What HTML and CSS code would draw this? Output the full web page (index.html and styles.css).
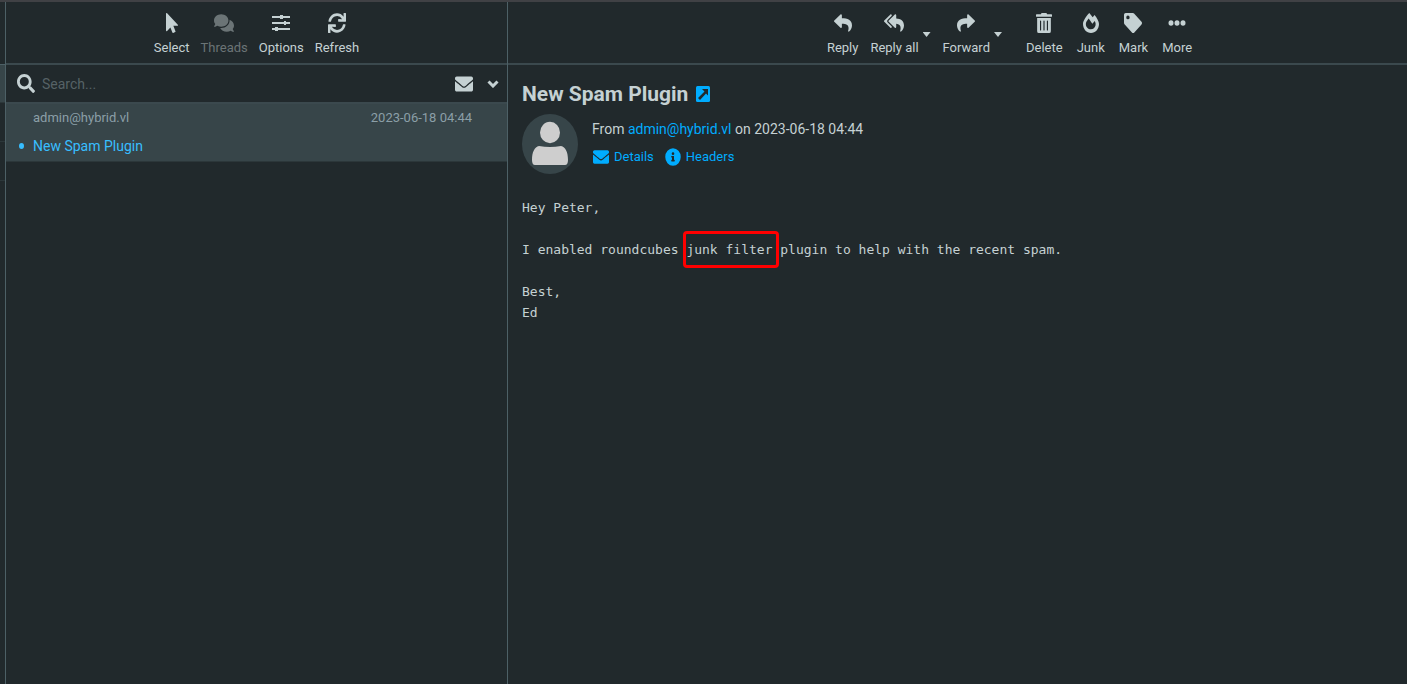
FILE: index.html
```html
<!DOCTYPE html>
<html lang="en">
<head>
<meta charset="utf-8">
<title>New Spam Plugin</title>
<link rel="stylesheet" href="styles.css">
</head>
<body>
<div class="app">
  <div class="folders"><div class="folder folder-selected"></div><div class="folder"></div><div class="folder"></div></div>
  <section class="list">
    <div class="toolbar toolbar-list">
      <button class="tool"><svg width="12" height="20" viewBox="0 0 320 512" preserveAspectRatio="none"><path d="M302 329H196l56 136c4 9-1 20-9 24l-50 21c-9 4-19 0-23-9l-53-129-87 89C19 473 0 464 0 448V18C0 2 20-6 30 5l285 293c11 11 3 31-13 31z"/></svg><span>Select</span></button>
      <button class="tool" disabled><svg width="20" height="20" viewBox="0 0 576 512" preserveAspectRatio="none"><path d="M416 192c0-88.4-93.1-160-208-160S0 103.6 0 192c0 34.3 14.1 65.9 38 92-13.4 30.2-35.500 54.200-35.800 54.500-2.200 2.300-2.800 5.700-1.500 8.700S4.800 352 8 352c36.600 0 66.900-12.300 88.700-25 32.200 15.700 70.300 25 111.300 25 114.900 0 208-71.600 208-160zm122 220c23.900-26 38-57.700 38-92 0-66.900-53.500-124.200-129.300-148.100.9 6.600 1.300 13.300 1.300 20.100 0 105.900-107.700 192-240 192-10.800 0-21.300-.8-31.700-1.900C207.800 439.600 281.800 480 368 480c41 0 79.100-9.200 111.300-25 21.800 12.700 52.100 25 88.700 25 3.200 0 6.100-1.900 7.300-4.800 1.300-2.900.7-6.300-1.500-8.700-.3-.3-22.400-24.200-35.800-54.500z"/></svg><span>Threads</span></button>
      <button class="tool"><svg width="18" height="18" viewBox="0 0 18 18"><path d="M0 2h8V1h3v1h7v2h-7v1H8V4H0zM0 8h12V7h2v1h4v2h-4v1h-2v-1H0zM0 14h3v-1h3v1h12v2H6v1H3v-1H0z"/></svg><span>Options</span></button>
      <button class="tool"><svg width="18" height="20" viewBox="0 0 512 512" preserveAspectRatio="none"><path d="M440.650 12.570l4 82.770A247.160 247.160 0 0 0 255.830 8C134.730 8 33.910 94.920 12.290 209.820A12 12 0 0 0 24.090 224h49.050a12 12 0 0 0 11.670-9.260 175.910 175.910 0 0 1 317-56.940l-101.460-4.860a12 12 0 0 0-12.570 12v47.410a12 12 0 0 0 12 12H500a12 12 0 0 0 12-12V12a12 12 0 0 0-12-12h-47.370a12 12 0 0 0-11.980 12.570zM255.830 432a175.610 175.610 0 0 1-146-77.800l101.800 4.870a12 12 0 0 0 12.570-12v-47.400a12 12 0 0 0-12-12H12a12 12 0 0 0-12 12V500a12 12 0 0 0 12 12h47.350a12 12 0 0 0 12-12.600l-4.150-82.570A247.170 247.170 0 0 0 255.830 504c121.110 0 221.930-86.920 243.550-201.820a12 12 0 0 0-11.800-14.180h-49.050a12 12 0 0 0-11.670 9.260A175.860 175.860 0 0 1 255.830 432z"/></svg><span>Refresh</span></button>
    </div>
    <div class="search">
      <svg width="18" height="19" viewBox="0 0 512 512" preserveAspectRatio="none"><path d="M505 443L405 343c-4-5-10-7-17-7h-16c28-35 44-80 44-128C416 93 323 0 208 0S0 93 0 208s93 208 208 208c48 0 93-16 128-44v16c0 7 2 13 7 17l100 100c9 9 24 9 34 0l28-28c9-10 9-25 0-34zM208 336a128 128 0 1 1 0-256 128 128 0 0 1 0 256z"/></svg>
      <input type="text" placeholder="Search..." aria-label="Search">
      <button class="icon-button" aria-label="Unread"><svg width="18" height="20" viewBox="0 0 512 512" preserveAspectRatio="none"><use href="#envelope"/></svg></button>
      <button class="icon-button" aria-label="Search options"><svg width="12" height="8" viewBox="0 0 12 8"><path d="M1.500 1.500L6 6l4.500-4.500" class="chevron"/></svg></button>
    </div>
    <article class="message">
      <div class="message-meta"><span>admin@hybrid.vl</span><time>2023-06-18 04:44</time></div>
      <div class="message-subject"><span class="dot"></span><a href="#">New Spam Plugin</a></div>
    </article>
  </section>
  <main class="mail">
    <div class="toolbar toolbar-mail">
      <button class="tool"><svg width="18" height="20" viewBox="0 0 512 512" preserveAspectRatio="none"><path id="reply" d="M8.300 189.800L184.300 37.900C199.700 24.500 224 35.300 224 56v80c160.600 1.900 288 34 288 186.300 0 61.500-39.600 122.300-83.300 154.200-13.700 9.900-33.100-2.600-28.100-18.700 45.300-145-21.500-183.500-176.600-185.700V360c0 20.700-24.300 31.500-39.700 18.200l-176-152c-11.100-9.600-11.100-26.800 0-36.400z"/></svg><span>Reply</span></button>
      <button class="tool"><svg width="20" height="20" viewBox="0 0 576 512" preserveAspectRatio="none"><path d="M136.300 189.800L312.300 37.900C327.700 24.500 352 35.300 352 56v82.800c129.200 10.200 224 52.200 224 183.500 0 61.500-39.600 122.300-83.300 154.200-13.700 9.900-33.100-2.600-28.100-18.700 38.500-123.100-3.900-169.400-112.600-182V360c0 20.700-24.300 31.500-39.700 18.200l-176-152c-11.100-9.600-11.100-26.800 0-36.400zm-128 36.400l176 152C199.700 391.400 224 380.700 224 360v-15.800l-108.600-93.800a56 56 0 0 1 0-84.800L224 71.800V56c0-20.700-24.300-31.500-39.700-18.100L8.300 189.800c-11.100 9.600-11.100 26.800 0 36.400z"/></svg><span>Reply all</span></button>
      <button class="more-arrow" aria-label="Reply options"></button>
      <button class="tool"><svg width="18" height="20" viewBox="0 0 512 512" preserveAspectRatio="none"><use href="#reply" transform="matrix(-1 0 0 1 512 0)"/></svg><span>Forward</span></button>
      <button class="more-arrow" aria-label="Forward options"></button>
      <div class="tool-group">
        <button class="tool"><svg width="16" height="20" viewBox="0 0 448 512" preserveAspectRatio="none"><path d="M32 464a48 48 0 0 0 48 48h288a48 48 0 0 0 48-48V128H32zm272-256a16 16 0 0 1 32 0v224a16 16 0 0 1-32 0zm-96 0a16 16 0 0 1 32 0v224a16 16 0 0 1-32 0zm-96 0a16 16 0 0 1 32 0v224a16 16 0 0 1-32 0zM432 32H312l-9-19a24 24 0 0 0-22-13H167a24 24 0 0 0-22 13l-9 19H16A16 16 0 0 0 0 48v32a16 16 0 0 0 16 16h416a16 16 0 0 0 16-16V48a16 16 0 0 0-16-16z"/></svg><span>Delete</span></button>
        <button class="tool"><svg width="16" height="20" viewBox="0 0 448 512" preserveAspectRatio="none"><path d="M324 51c-21 19-39 40-54 60C245 76 213 37 176 0 79 90 0 208 0 281c0 130 100 231 224 231s224-101 224-231c0-54-56-164-124-230zm-19 337c-23 17-52 28-83 28-79 0-142-52-142-135 0-41 26-78 78-140 8 9 106 135 106 135l63-72c4 7 8 15 12 22 29 56 17 127-34 162z"/></svg><span>Junk</span></button>
        <button class="tool"><svg width="18" height="20" viewBox="0 0 512 512" preserveAspectRatio="none"><path d="M0 252V48C0 21 21 0 48 0h204a48 48 0 0 1 34 14l212 212c19 19 19 49 0 68L294 498c-19 19-49 19-68 0L14 286A48 48 0 0 1 0 252zM112 64a48 48 0 1 0 0 96 48 48 0 0 0 0-96z"/></svg><span>Mark</span></button>
        <button class="tool"><svg width="18" height="20" viewBox="0 0 18 20"><ellipse cx="3" cy="10" rx="2.500" ry="2.700"/><ellipse cx="9" cy="10" rx="2.500" ry="2.700"/><ellipse cx="15" cy="10" rx="2.500" ry="2.700"/></svg><span>More</span></button>
      </div>
    </div>
    <header class="mail-header">
      <h1>New Spam Plugin <a href="#" aria-label="Open in new window"><svg width="14" height="16" viewBox="0 0 14 16"><path class="link-fill" d="M1.500 0h11Q14 0 14 1.500v13Q14 16 12.500 16h-11Q0 16 0 14.500v-13Q0 0 1.500 0z"/><path class="cutout" d="M6 3h6v6.500l-2-2L4 14l-2-2 6.500-6.500z"/></svg></a></h1>
      <div class="sender">
        <svg width="56" height="60" viewBox="0 0 56 60"><ellipse class="avatar-back" cx="28" cy="30" rx="28" ry="30"/><g class="avatar-person"><ellipse cx="28" cy="18.500" rx="10" ry="10.700"/><path d="M17 32q11 2 22 0c4.500 1 7 6 7 14 0 3-1 5-3 5H13c-2 0-3-2-3-5 0-8 2.500-13 7-14z"/></g></svg>
        <div class="sender-text">
          <p class="from">From <a href="#">admin@hybrid.vl</a> on 2023-06-18 04:44</p>
          <p class="links">
            <a href="#"><svg width="16" height="18" viewBox="0 0 512 512" preserveAspectRatio="none"><path id="envelope" d="M502.300 190.800c3.900-3.100 9.700-.2 9.700 4.700V400c0 26.500-21.500 48-48 48H48c-26.500 0-48-21.500-48-48V195.600c0-5 5.700-7.800 9.700-4.700 22.400 17.400 52.100 39.500 154.100 113.600 21.100 15.400 56.700 47.800 92.200 47.600 35.700.3 72-32.800 92.300-47.600 102-74.100 131.600-96.300 154-113.700zM256 320c23.200.4 56.600-29.200 73.400-41.400 132.700-96.300 142.800-104.700 173.400-128.700 5.800-4.500 9.200-11.500 9.200-18.900v-19c0-26.500-21.500-48-48-48H48c-26.500 0-48 21.500-48 48v19c0 7.400 3.400 14.300 9.200 18.900 30.600 23.900 40.700 32.400 173.400 128.700 16.800 12.200 50.200 41.800 73.400 41.400z"/></svg>Details</a>
            <a href="#"><svg width="16" height="18" viewBox="0 0 512 512" preserveAspectRatio="none"><path d="M256 8a248 248 0 1 0 0 496 248 248 0 0 0 0-496zm0 110a42 42 0 1 1 0 84 42 42 0 0 1 0-84zm56 254q0 12-12 12h-88q-12 0-12-12v-24q0-12 12-12h12v-64h-12q-12 0-12-12v-24q0-12 12-12h64q12 0 12 12v100h12q12 0 12 12z"/></svg>Headers</a>
          </p>
        </div>
      </div>
    </header>
    <div class="body">
      <p>Hey Peter,</p>
      <p>I enabled roundcubes <mark>junk filter</mark> plugin to help with the recent spam.</p>
      <p>Best,<br>Ed</p>
    </div>
  </main>
</div>
</body>
</html>
```
FILE: styles.css
```css
* { box-sizing: border-box; }
body { margin: 0; background: #21292c; color: #c5d1d3; font: 14px/20px Roboto, sans-serif; }
svg { display: block; fill: currentColor; flex: none; }
button { border: 0; padding: 0; background: none; color: inherit; font: inherit; }
p, h1 { margin: 0; }
a { color: #00acff; text-decoration: none; }
.app { display: flex; min-height: 100vh; border-top: 2px solid #404145; }
.folders { width: 5px; padding-top: 62px; }
.folder { height: 39px; border-bottom: 1px solid #2c373a; }
.folder-selected { background: #374549; border-top: 1px solid #4d6066; }
.list { width: 503px; border: solid #4d6066; border-width: 0 1px; }
.mail { flex: 1; min-width: 0; }
.toolbar { display: flex; height: 63px; padding-top: 11px; border-bottom: 2px solid #3b494e; align-items: flex-start; justify-content: center; }
.toolbar-list { gap: 11px; }
.toolbar-mail { gap: 12px; padding-left: 104px; }
.tool { display: flex; flex-direction: column; align-items: center; font-size: 13px; line-height: 16px; gap: 7px; }
.tool svg { height: 20px; }
.tool:disabled { color: #6b7476; }
.tool-group { display: flex; gap: 14px; margin-left: 12px; }
.more-arrow { width: 8px; height: 5px; margin: 19px 0 0 -8px; background: currentColor; clip-path: polygon(0 0, 100% 0, 50% 100%); }
.search { display: flex; align-items: center; height: 39px; padding: 0 8px 0 11px; border-bottom: 2px solid #3b494e; }
.search input { flex: 1; min-width: 0; margin-left: 7px; padding: 0; border: 0; outline: 0; background: none; color: inherit; font: inherit; }
.search input::placeholder { color: #566266; opacity: 1; }
.icon-button { margin-left: 14px; }
.chevron { fill: none; stroke: currentColor; stroke-width: 3; }
.message { height: 58px; padding: 4px 35px 0 27px; background: #374549; border-bottom: 1px solid #2c373a; }
.message-meta { display: flex; justify-content: space-between; font-size: 13px; color: #8b9fa7; }
.message-subject { display: flex; align-items: center; margin: 8px 0 0 -14px; gap: 9px; }
.message-subject a { color: #37beff; }
.dot { width: 5px; height: 6px; border-radius: 50%; background: #37beff; }
.mail-header { padding: 16px 14px 0; }
h1 { display: flex; align-items: center; gap: 8px; font-size: 21px; line-height: 26px; font-weight: 700; }
.link-fill { fill: #00acff; }
.cutout { fill: #21292c; }
.sender { display: flex; gap: 14px; margin-top: 7px; }
.avatar-back { fill: #374549; }
.avatar-person { fill: #cecece; }
.from { margin-top: 5px; }
.links { display: flex; gap: 11px; margin: 8px 0 0 1px; font-size: 13px; }
.links a { display: flex; align-items: center; gap: 5px; }
.body { padding: 23px 14px; font: 13px/21px "DejaVu Sans Mono", monospace; }
.body p { margin-bottom: 21px; }
mark { color: inherit; background: none; outline: 3px solid #f00; border-radius: 1px; padding: 8px 4px 8px 0; margin-right: -4px; }
```
